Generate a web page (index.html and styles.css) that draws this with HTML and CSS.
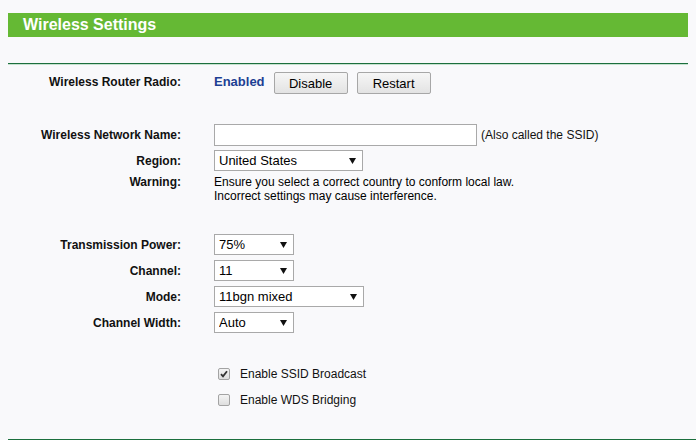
FILE: index.html
```html
<!DOCTYPE html>
<html>
<head>
<meta charset="utf-8">
<link rel="stylesheet" href="styles.css">
</head>
<body>
<div class="page">
  <div class="titlebar">Wireless Settings</div>
  <div class="rule"></div>
  <div class="form">
    <div class="row row-radio">
      <div class="label">Wireless Router Radio:</div>
      <div class="value">
        <span class="status">Enabled</span>
        <button class="btn">Disable</button>
        <button class="btn">Restart</button>
      </div>
    </div>

    <div class="group group-net">
      <div class="row">
        <div class="label">Wireless Network Name:</div>
        <div class="value"><input class="text" type="text" value=""><span class="hint">(Also called the SSID)</span></div>
      </div>
      <div class="row">
        <div class="label">Region:</div>
        <div class="value">
          <span class="select sel-region"><select><option>United States</option></select><svg class="arrow" width="7" height="6" viewBox="0 0 7 6"><polygon points="0,0 7,0 3.5,6" fill="#111"/></svg></span>
        </div>
      </div>
      <div class="row row-warn">
        <div class="label">Warning:</div>
        <div class="value warn">Ensure you select a correct country to conform local law.<br>Incorrect settings may cause interference.</div>
      </div>
    </div>

    <div class="group group-radio">
      <div class="row">
        <div class="label">Transmission Power:</div>
        <div class="value">
          <span class="select sel-small"><select><option>75%</option></select><svg class="arrow" width="7" height="6" viewBox="0 0 7 6"><polygon points="0,0 7,0 3.5,6" fill="#111"/></svg></span>
        </div>
      </div>
      <div class="row">
        <div class="label">Channel:</div>
        <div class="value">
          <span class="select sel-small"><select><option>11</option></select><svg class="arrow" width="7" height="6" viewBox="0 0 7 6"><polygon points="0,0 7,0 3.5,6" fill="#111"/></svg></span>
        </div>
      </div>
      <div class="row">
        <div class="label">Mode:</div>
        <div class="value">
          <span class="select sel-mode"><select><option>11bgn mixed</option></select><svg class="arrow" width="7" height="6" viewBox="0 0 7 6"><polygon points="0,0 7,0 3.5,6" fill="#111"/></svg></span>
        </div>
      </div>
      <div class="row">
        <div class="label">Channel Width:</div>
        <div class="value">
          <span class="select sel-small"><select><option>Auto</option></select><svg class="arrow" width="7" height="6" viewBox="0 0 7 6"><polygon points="0,0 7,0 3.5,6" fill="#111"/></svg></span>
        </div>
      </div>
    </div>

    <div class="group group-checks">
      <div class="row row-check">
        <div class="label"></div>
        <label class="value check">
          <span class="box"><svg width="10" height="10" viewBox="0 0 10 10"><path d="M2 5.2 L4 7.4 L8 2.2" fill="none" stroke="#333" stroke-width="1.8"/></svg></span>
          <span>Enable SSID Broadcast</span>
        </label>
      </div>
      <div class="row row-check">
        <div class="label"></div>
        <label class="value check">
          <span class="box"></span>
          <span>Enable WDS Bridging</span>
        </label>
      </div>
    </div>
  </div>
  <div class="rule rule-bottom"></div>
</div>
</body>
</html>
```

FILE: styles.css
```css
html, body {
  margin: 0;
  padding: 0;
  background: #f9f9fb;
}
body {
  font-family: "Liberation Sans", Arial, sans-serif;
  font-size: 12px;
  color: #000;
  overflow: hidden;
}
.page {
  padding: 13px 8px 0 8px;
}
.titlebar {
  height: 24px;
  line-height: 24px;
  background: #65b934;
  color: #fff;
  font-weight: bold;
  font-size: 16px;
  padding-left: 15px;
}
.rule {
  margin-top: 26px;
  height: 0;
  border-top: 1px solid #1c6f3d;
  border-bottom: 1px solid #c6e2cf;
}
.rule-bottom {
  margin-top: 26px;
  margin-right: -8px;
  border-bottom: none;
}
.form {
  margin-top: 7px;
  display: flex;
  flex-direction: column;
}
.row {
  display: grid;
  grid-template-columns: 173px 1fr;
  column-gap: 33px;
  align-items: center;
}
.label {
  text-align: right;
  font-weight: bold;
  color: #111;
}
.value {
  display: flex;
  align-items: center;
}
.row-radio {
  height: 22px;
}
.row-radio .label {
  margin-bottom: 2px;
}
.status {
  color: #1d3f93;
  font-weight: bold;
  font-size: 13px;
  margin-right: 9px;
  margin-bottom: 4px;
}
.btn {
  width: 74px;
  height: 22px;
  margin: 0 9px 0 0;
  padding: 0;
  font-family: "Liberation Sans", Arial, sans-serif;
  font-size: 13px;
  color: #000;
  border: 1px solid #a7a7a7;
  border-radius: 2px;
  background: linear-gradient(#f6f6f6, #e3e3e3);
}
.group {
  display: flex;
  flex-direction: column;
  gap: 5px;
}
.group-net {
  margin-top: 30px;
}
.group-net .row-warn {
  margin-top: -1px;
  align-items: start;
  line-height: 14px;
}
.group-radio {
  margin-top: 31px;
}
.text {
  box-sizing: border-box;
  width: 263px;
  height: 22px;
  margin: 0 4px 0 0;
  border: 1px solid #a9a9a9;
  background: #fff;
  padding: 0 4px;
  font-family: "Liberation Sans", Arial, sans-serif;
  font-size: 13px;
}
.group-net .row:first-child {
  height: 22px;
  margin-bottom: -1px;
}
.hint {
  color: #111;
}
.select {
  position: relative;
  display: inline-block;
  height: 21px;
}
.select select {
  appearance: none;
  -webkit-appearance: none;
  box-sizing: border-box;
  height: 21px;
  margin: 0;
  border: 1px solid #a9a9a9;
  border-radius: 0;
  background: #fff;
  padding: 0 0 0 4px;
  font-family: "Liberation Sans", Arial, sans-serif;
  font-size: 13px;
  color: #000;
  display: block;
}
.select .arrow {
  position: absolute;
  right: 7px;
  top: 8px;
  pointer-events: none;
}
.sel-region select { width: 149px; }
.sel-small select { width: 80px; }
.sel-mode select { width: 150px; }
.group-checks {
  margin-top: 28px;
  gap: 0;
}
.row-check {
  height: 26px;
}
.check {
  padding-left: 4px;
  color: #111;
  gap: 10px;
}
.box {
  box-sizing: border-box;
  width: 12px;
  height: 12px;
  border: 1px solid #a3a3a3;
  border-radius: 2px;
  background: linear-gradient(#f4f4f4, #dedede);
  display: flex;
  align-items: center;
  justify-content: center;
}
```
